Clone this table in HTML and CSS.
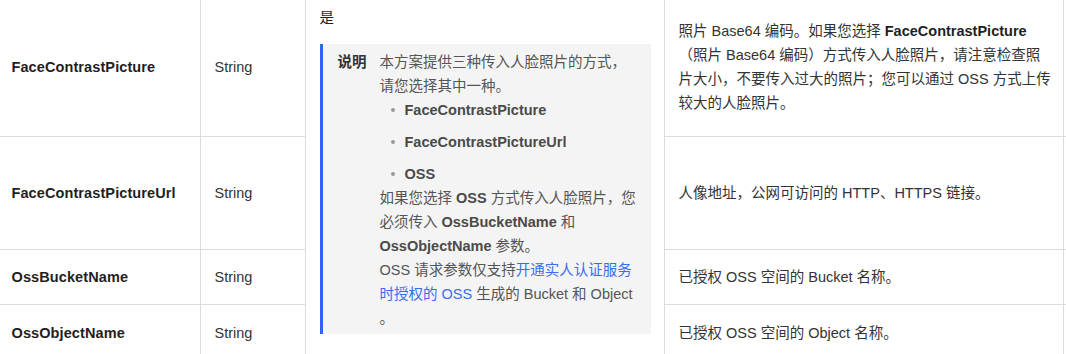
FILE: index.html
```html
<!DOCTYPE html>
<html lang="zh-CN">
<head>
<meta charset="utf-8">
<title>参数</title>
<link rel="stylesheet" href="styles.css">
</head>
<body>
<table class="params">
  <colgroup>
    <col class="c-name"><col class="c-type"><col class="c-req"><col class="c-desc"><col class="c-extra">
  </colgroup>
  <tbody>
    <tr class="r1">
      <td class="name">FaceContrastPicture</td>
      <td class="type">String</td>
      <td class="req" rowspan="4">
        <p class="req-val">是</p>
        <div class="note">
          <strong class="note-title">说明</strong>
          <div class="note-body">
            <p class="np">本方案提供三种传入人脸照片的方式，<br>请您选择其中一种。</p>
            <ul class="note-list">
              <li>FaceContrastPicture</li>
              <li>FaceContrastPictureUrl</li>
              <li>OSS</li>
            </ul>
            <p class="np">如果您选择 <b>OSS</b> 方式传入人脸照片，您<br>必须传入 <b>OssBucketName</b> 和<br><b>OssObjectName</b> 参数。</p>
            <p class="np">OSS 请求参数仅支持<a class="link" href="#">开通实人认证服务<br>时授权的 OSS</a> 生成的 Bucket 和 Object<br>。</p>
          </div>
        </div>
      </td>
      <td class="desc">照片 Base64 编码。如果您选择 <b>FaceContrastPicture</b><br>（照片 Base64 编码）方式传入人脸照片，请注意检查照<br>片大小，不要传入过大的照片；您可以通过 OSS 方式上传<br>较大的人脸照片。</td>
      <td class="extra"></td>
    </tr>
    <tr class="r2">
      <td class="name">FaceContrastPictureUrl</td>
      <td class="type">String</td>
      <td class="desc">人像地址，公网可访问的 HTTP、HTTPS 链接。</td>
      <td class="extra"></td>
    </tr>
    <tr class="r3">
      <td class="name">OssBucketName</td>
      <td class="type">String</td>
      <td class="desc">已授权 OSS 空间的 Bucket 名称。</td>
      <td class="extra"></td>
    </tr>
    <tr class="r4">
      <td class="name">OssObjectName</td>
      <td class="type">String</td>
      <td class="desc">已授权 OSS 空间的 Object 名称。</td>
      <td class="extra"></td>
    </tr>
  </tbody>
</table>
</body>
</html>
```
FILE: styles.css
```css
html, body {
  margin: 0;
  background: #fff;
}
body {
  overflow: hidden;
  font-family: "Liberation Sans", Arial, "Noto Sans CJK SC", sans-serif;
  font-size: 14.5px;
  line-height: 24px;
  color: #333;
}
.params {
  border-collapse: collapse;
  table-layout: fixed;
  width: 1116px;
  margin: -4px 0 0 -3px;
}
.c-name { width: 203px; }
.c-type { width: 105px; }
.c-req { width: 359px; }
.c-desc { width: 399px; }
.c-extra { width: 50px; }

.params td {
  border: 1px solid #dcdcdc;
  padding: 0 13.5px;
  vertical-align: middle;
}
.r1 { height: 140px; }
.r2 { height: 113px; }
.r3 { height: 55px; }
.r4 { height: 56px; }

.name {
  font-weight: bold;
  color: #1f1f1f;
  white-space: nowrap;
  letter-spacing: 0.1px;
}
.type { color: #333; }
.desc {
  color: #333;
  white-space: nowrap;
}
.desc b { color: #1f1f1f; }

.params td.req {
  vertical-align: top;
  padding-top: 9px;
}
.req-val {
  margin: 0 0 14px;
  color: #1f1f1f;
}
.note {
  display: flex;
  background: #f4f4f4;
  border-left: 3px solid #2c66ee;
  padding: 6px 12px 4px 15px;
}
.note-title {
  flex: none;
  margin-right: 13px;
  font-weight: bold;
  color: #333;
}
.note-body {
  flex: 1;
  color: #555;
  white-space: nowrap;
}
.note-body b { color: #4a4a4a; }
.np { margin: 0; }
.note-list {
  list-style: none;
  margin: 0;
  padding: 0 0 0 25px;
}
.note-list li {
  position: relative;
  font-weight: bold;
  color: #4a4a4a;
}
.note-list li + li { margin-top: 8px; }
.note-list li::before {
  content: "";
  position: absolute;
  left: -14px;
  top: 10px;
  width: 4px;
  height: 4px;
  border-radius: 50%;
  background: #999;
}
.link {
  color: #3a6cf0;
  text-decoration: none;
}
```
